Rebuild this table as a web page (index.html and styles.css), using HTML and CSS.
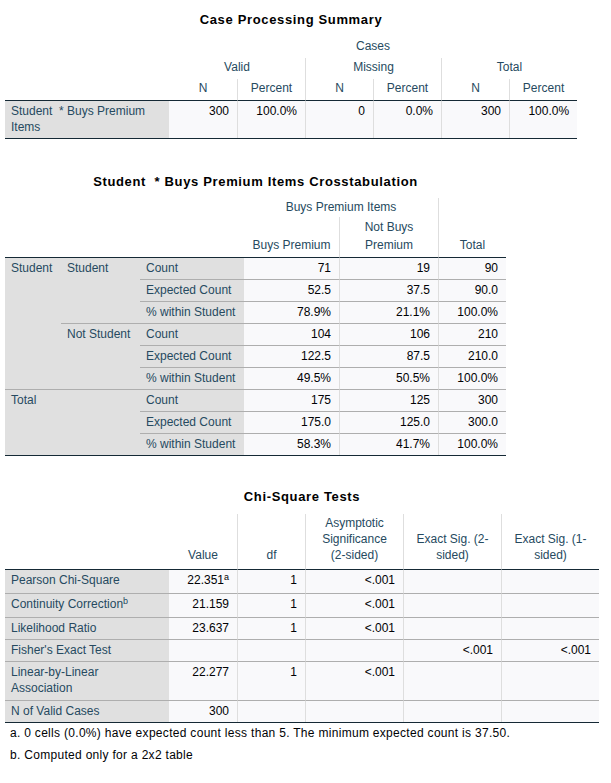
FILE: index.html
```html
<!DOCTYPE html>
<html lang="en">
<head>
<meta charset="utf-8">
<title>Crosstabs output</title>
<link rel="stylesheet" href="styles.css">
</head>
<body>
<section class="pivot cps">
  <div class="title">Case Processing Summary</div>
  <table class="grid">
    <colgroup><col class="c164"><col class="c68"><col class="c68"><col class="c68"><col class="c68"><col class="c68"><col class="c68"></colgroup>
    <thead>
      <tr class="h1"><th class="corner" rowspan="3"></th><th colspan="6">Cases</th></tr>
      <tr class="h2"><th colspan="2">Valid</th><th colspan="2" class="vl">Missing</th><th colspan="2" class="vl">Total</th></tr>
      <tr class="h3"><th>N</th><th class="vl">Percent</th><th class="vl">N</th><th class="vl">Percent</th><th class="vl">N</th><th class="vl">Percent</th></tr>
    </thead>
    <tbody>
      <tr><th>Student&nbsp; * Buys Premium Items</th><td>300</td><td class="vl">100.0%</td><td class="vl">0</td><td class="vl">0.0%</td><td class="vl">300</td><td class="vl">100.0%</td></tr>
    </tbody>
  </table>
</section>

<section class="pivot xtab">
  <div class="title">Student&nbsp; * Buys Premium Items Crosstabulation</div>
  <table class="grid">
    <colgroup><col class="c56"><col class="c79"><col class="c104"><col class="c95"><col class="c99"><col class="c68"></colgroup>
    <thead>
      <tr class="h1"><th class="corner" colspan="3" rowspan="2"></th><th colspan="2">Buys Premium Items</th><th rowspan="2" class="vl tall">Total</th></tr>
      <tr class="h2"><th class="tall">Buys Premium</th><th class="vl tall">Not Buys<br>Premium</th></tr>
    </thead>
    <tbody>
      <tr><th rowspan="6">Student</th><th rowspan="3">Student</th><th>Count</th><td>71</td><td class="vl">19</td><td class="vl">90</td></tr>
      <tr><th>Expected Count</th><td>52.5</td><td class="vl">37.5</td><td class="vl">90.0</td></tr>
      <tr><th>% within Student</th><td>78.9%</td><td class="vl">21.1%</td><td class="vl">100.0%</td></tr>
      <tr><th rowspan="3">Not Student</th><th>Count</th><td>104</td><td class="vl">106</td><td class="vl">210</td></tr>
      <tr><th>Expected Count</th><td>122.5</td><td class="vl">87.5</td><td class="vl">210.0</td></tr>
      <tr><th>% within Student</th><td>49.5%</td><td class="vl">50.5%</td><td class="vl">100.0%</td></tr>
      <tr><th colspan="2" rowspan="3">Total</th><th>Count</th><td>175</td><td class="vl">125</td><td class="vl">300</td></tr>
      <tr><th>Expected Count</th><td>175.0</td><td class="vl">125.0</td><td class="vl">300.0</td></tr>
      <tr><th>% within Student</th><td>58.3%</td><td class="vl">41.7%</td><td class="vl">100.0%</td></tr>
    </tbody>
  </table>
</section>

<section class="pivot chi">
  <div class="title">Chi-Square Tests</div>
  <table class="grid">
    <colgroup><col class="c164"><col class="c68"><col class="c68"><col class="c98"><col class="c98"><col class="c98"></colgroup>
    <thead>
      <tr><th class="corner"></th><th>Value</th><th class="vl">df</th><th class="vl">Asymptotic<br>Significance<br>(2-sided)</th><th class="vl">Exact Sig. (2-<br>sided)</th><th class="vl">Exact Sig. (1-<br>sided)</th></tr>
    </thead>
    <tbody>
      <tr class="sr"><th>Pearson Chi-Square</th><td>22.351<sup>a</sup></td><td class="vl">1</td><td class="vl">&lt;.001</td><td class="vl"></td><td class="vl"></td></tr>
      <tr class="sr"><th>Continuity Correction<sup>b</sup></th><td>21.159</td><td class="vl">1</td><td class="vl">&lt;.001</td><td class="vl"></td><td class="vl"></td></tr>
      <tr><th>Likelihood Ratio</th><td>23.637</td><td class="vl">1</td><td class="vl">&lt;.001</td><td class="vl"></td><td class="vl"></td></tr>
      <tr><th>Fisher's Exact Test</th><td></td><td class="vl"></td><td class="vl"></td><td class="vl">&lt;.001</td><td class="vl">&lt;.001</td></tr>
      <tr class="two"><th>Linear-by-Linear<br>Association</th><td>22.277</td><td class="vl">1</td><td class="vl">&lt;.001</td><td class="vl"></td><td class="vl"></td></tr>
      <tr><th>N of Valid Cases</th><td>300</td><td class="vl"></td><td class="vl"></td><td class="vl"></td><td class="vl"></td></tr>
    </tbody>
  </table>
  <div class="foot first">a. 0 cells (0.0%) have expected count less than 5. The minimum expected count is 37.50.</div>
  <div class="foot">b. Computed only for a 2x2 table</div>
</section>
</body>
</html>
```

FILE: styles.css
```css
body {
  margin: 0;
  padding-top: 1px;
  background: #ffffff;
  font-family: "Liberation Sans", Arial, sans-serif;
  font-size: 12px;
  color: #264a60;
}

.pivot { margin-left: 5px; }
.cps { width: 572px; }
.xtab { width: 501px; }
.chi { width: 594px; }

.title {
  font-weight: bold;
  font-size: 13px;
  letter-spacing: 0.65px;
  color: #000000;
  text-align: center;
  height: 31px;
  line-height: 30px;
  white-space: nowrap;
}
.cps .title { margin-top: 4px; }
.xtab .title { margin-top: 28px; }
.chi .title { margin-top: 26px; height: 32px; }

.c164 { width: 164px; }
.c104 { width: 104px; }
.c99 { width: 99px; }
.c98 { width: 98px; }
.c95 { width: 95px; }
.c79 { width: 79px; }
.c68 { width: 68px; }
.c56 { width: 56px; }

table.grid {
  border-collapse: separate;
  border-spacing: 0;
  table-layout: fixed;
  width: 100%;
  border-bottom: 1px solid #152935;
}

.grid th,
.grid td {
  font-weight: normal;
  line-height: 16px;
  padding: 2px 8px 3px 6px;
}

.grid thead th {
  text-align: center;
  vertical-align: bottom;
  color: #264a60;
  background: #ffffff;
  padding: 1px 6px 4px;
}
.cps thead .h1 th { padding-top: 2px; }

.xtab thead th { padding: 1px 6px 2px; }
.xtab thead th.tall { line-height: 18px; padding-bottom: 3px; }

.chi thead th { padding: 1px 6px 6px; }

.grid tbody th {
  text-align: left;
  vertical-align: top;
  background: #e0e0e0;
  color: #264a60;
}
.grid tbody td {
  text-align: right;
  vertical-align: top;
  background: #f9f9fb;
  color: #010205;
}

.grid tbody tr > * { border-top: 1px solid #aeaeae; }
.grid tbody tr:first-child > * { border-top-color: #152935; }
.grid .vl { border-left: 1px solid #dedede; }

.chi tbody tr.sr > * { padding-bottom: 5px; }
.chi tbody tr.two > * { padding-bottom: 4px; }

.grid sup {
  font-size: 9px;
  line-height: 0;
  vertical-align: 4px;
}

.foot {
  padding-left: 5px;
  line-height: 20px;
  margin-top: 2px;
  letter-spacing: 0.3px;
  color: #010205;
  white-space: nowrap;
}
.foot.first { margin-top: 0; }
```
